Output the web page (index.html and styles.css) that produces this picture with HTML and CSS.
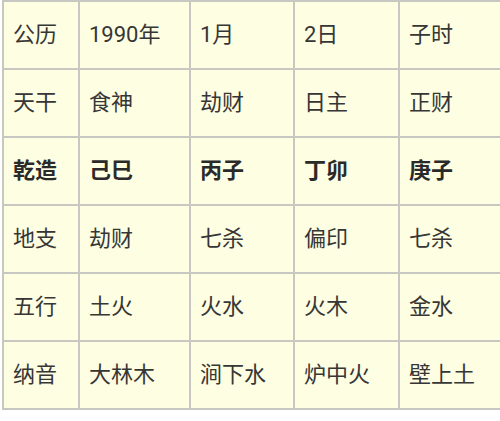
FILE: index.html
```html
<!DOCTYPE html>
<html lang="zh">
<head>
<meta charset="utf-8">
<link rel="stylesheet" href="styles.css">
</head>
<body>
<div class="bazi">
  <div class="cell">公历</div><div class="cell">1990年</div><div class="cell">1月</div><div class="cell">2日</div><div class="cell">子时</div>
  <div class="cell">天干</div><div class="cell">食神</div><div class="cell">劫财</div><div class="cell">日主</div><div class="cell">正财</div>
  <div class="cell strong">乾造</div><div class="cell strong">己巳</div><div class="cell strong">丙子</div><div class="cell strong">丁卯</div><div class="cell strong">庚子</div>
  <div class="cell">地支</div><div class="cell">劫财</div><div class="cell">七杀</div><div class="cell">偏印</div><div class="cell">七杀</div>
  <div class="cell">五行</div><div class="cell">土火</div><div class="cell">火水</div><div class="cell">火木</div><div class="cell">金水</div>
  <div class="cell">纳音</div><div class="cell">大林木</div><div class="cell">涧下水</div><div class="cell">炉中火</div><div class="cell">壁上土</div>
</div>
</body>
</html>
```

FILE: styles.css
```css
html, body {
  margin: 0;
  padding: 0;
  background: #ffffff;
  overflow: hidden;
}
body {
  width: 500px;
  height: 421px;
  padding-left: 2px;
  box-sizing: border-box;
  font-family: "Roboto", "Noto Sans CJK SC", sans-serif;
}
.bazi {
  display: grid;
  grid-template-columns: 76px 111px 104px 105px 120px;
  grid-auto-rows: 68px;
  width: max-content;
  border-top: 2px solid #c8c8c2;
  border-left: 2px solid #c8c8c2;
  background: #fefee2;
}
.cell {
  box-sizing: border-box;
  border-right: 2px solid #c8c8c2;
  border-bottom: 2px solid #c8c8c2;
  display: flex;
  align-items: center;
  padding-left: 9px;
  padding-bottom: 7px;
  font-size: 22px;
  color: #363636;
  white-space: nowrap;
}
.strong {
  font-weight: bold;
  color: #2a2a2a;
}
```
